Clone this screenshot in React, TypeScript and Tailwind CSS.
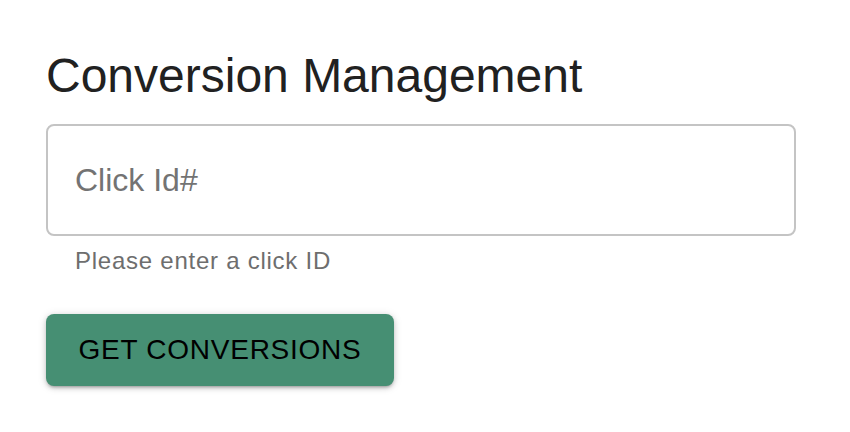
export default function App() {
  return (
    <div
      className="min-h-[432px] w-[850px] bg-white pl-[46px] pt-[52px]"
      style={{ fontFamily: '"Liberation Sans", Arial, sans-serif' }}
    >
      <h1 className="text-[48px] leading-[48px] font-normal text-[#212121]">
        Conversion Management
      </h1>
      <div className="mt-[24px] w-[750px]">
        <input
          type="text"
          placeholder="Click Id#"
          className="h-[112px] w-full rounded-[8px] border-2 border-[#c4c4c4] px-[27px] text-[32px] text-[#212121] outline-none placeholder:text-[#737373]"
        />
        <p className="mt-[5px] h-[40px] px-[29px] text-[24px] leading-[40px] tracking-[0.75px] text-[#6e6e6e]">
          Please enter a click ID
        </p>
      </div>
      <button className="mt-[33px] h-[72px] w-[348px] rounded-[8px] bg-[#468f73] text-[28px] tracking-[0.75px] text-black shadow-[0_3px_3px_-2px_rgba(0,0,0,0.25),0_2px_5px_0_rgba(0,0,0,0.16),0_1px_10px_0_rgba(0,0,0,0.12)]">
        GET CONVERSIONS
      </button>
    </div>
  );
}
